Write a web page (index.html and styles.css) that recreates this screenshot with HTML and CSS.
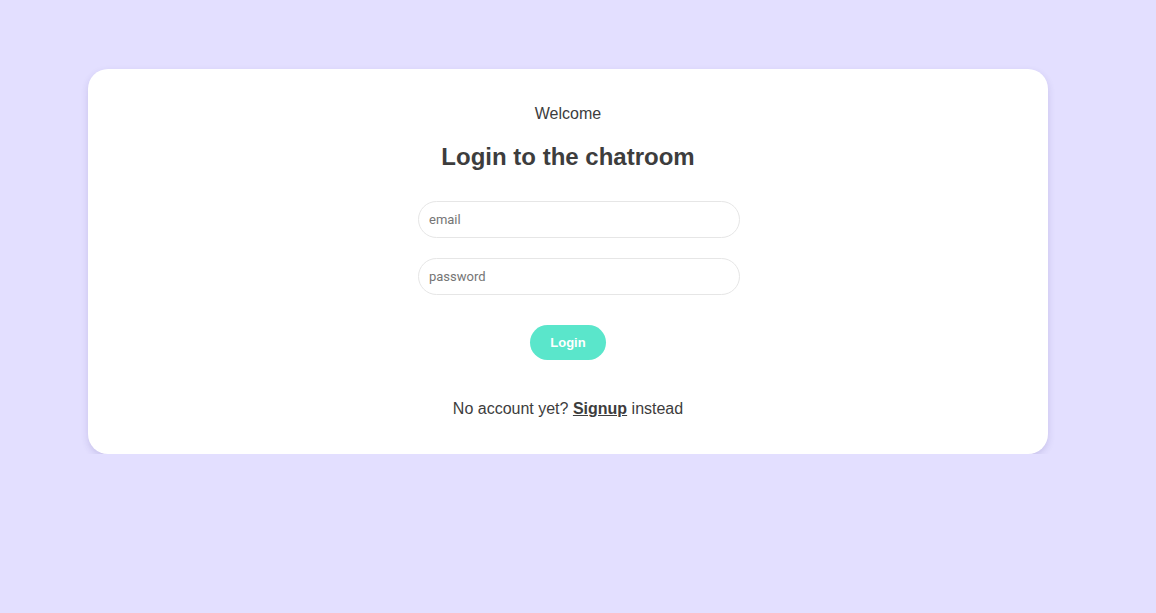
FILE: index.html
```html
<!DOCTYPE html>
<html lang="en">
<head>
<meta charset="utf-8">
<title>Login</title>
<link rel="stylesheet" href="styles.css">
</head>
<body>
<main class="page">
  <section class="card">
    <p class="welcome">Welcome</p>
    <h2 class="title">Login to the chatroom</h2>
    <form class="form">
      <input class="field" type="email" placeholder="email">
      <input class="field" type="password" placeholder="password">
      <button class="btn" type="button">Login</button>
    </form>
    <p class="alt">No account yet? <a class="link" href="#">Signup</a> instead</p>
  </section>
</main>
</body>
</html>
```
FILE: styles.css
```css
html, body {
  margin: 0;
  padding: 0;
  background: #e3dfff;
  font-family: "Liberation Sans", Arial, sans-serif;
  color: #3d3d3d;
}
.page {
  padding: 69px 0 0 88px;
}
.card {
  box-sizing: border-box;
  width: 960px;
  height: 385px;
  background: #ffffff;
  border-radius: 20px;
  box-shadow: 0 3px 7px rgba(60, 50, 130, 0.16);
  display: flex;
  flex-direction: column;
  align-items: center;
  padding-top: 36px;
}
.welcome {
  margin: 0;
  font-size: 16px;
  line-height: 18px;
}
.title {
  margin: 20px 0 0;
  font-size: 24px;
  line-height: 28px;
  font-weight: bold;
}
.form {
  margin-top: 30px;
  display: flex;
  flex-direction: column;
  align-items: center;
  gap: 20px;
}
.field {
  box-sizing: border-box;
  width: 322px;
  height: 37px;
  margin-left: 22px;
  border: 1px solid #e6e6e6;
  border-radius: 20px;
  padding: 0 10px;
  font-family: Roboto, "Liberation Sans", sans-serif;
  font-size: 13px;
  outline: none;
  background: #fff;
}
.field::placeholder {
  color: #757575;
}
.btn {
  margin-top: 10px;
  box-sizing: border-box;
  width: 76px;
  height: 35px;
  border: none;
  border-radius: 18px;
  background: #5ae6cb;
  color: #ffffff;
  font-family: "Liberation Sans", Arial, sans-serif;
  font-weight: bold;
  font-size: 13px;
  cursor: pointer;
}
.alt {
  margin: 40px 0 0;
  font-size: 16px;
  line-height: 18px;
}
.link {
  color: #3d3d3d;
  font-weight: bold;
  text-decoration: underline;
}
```
